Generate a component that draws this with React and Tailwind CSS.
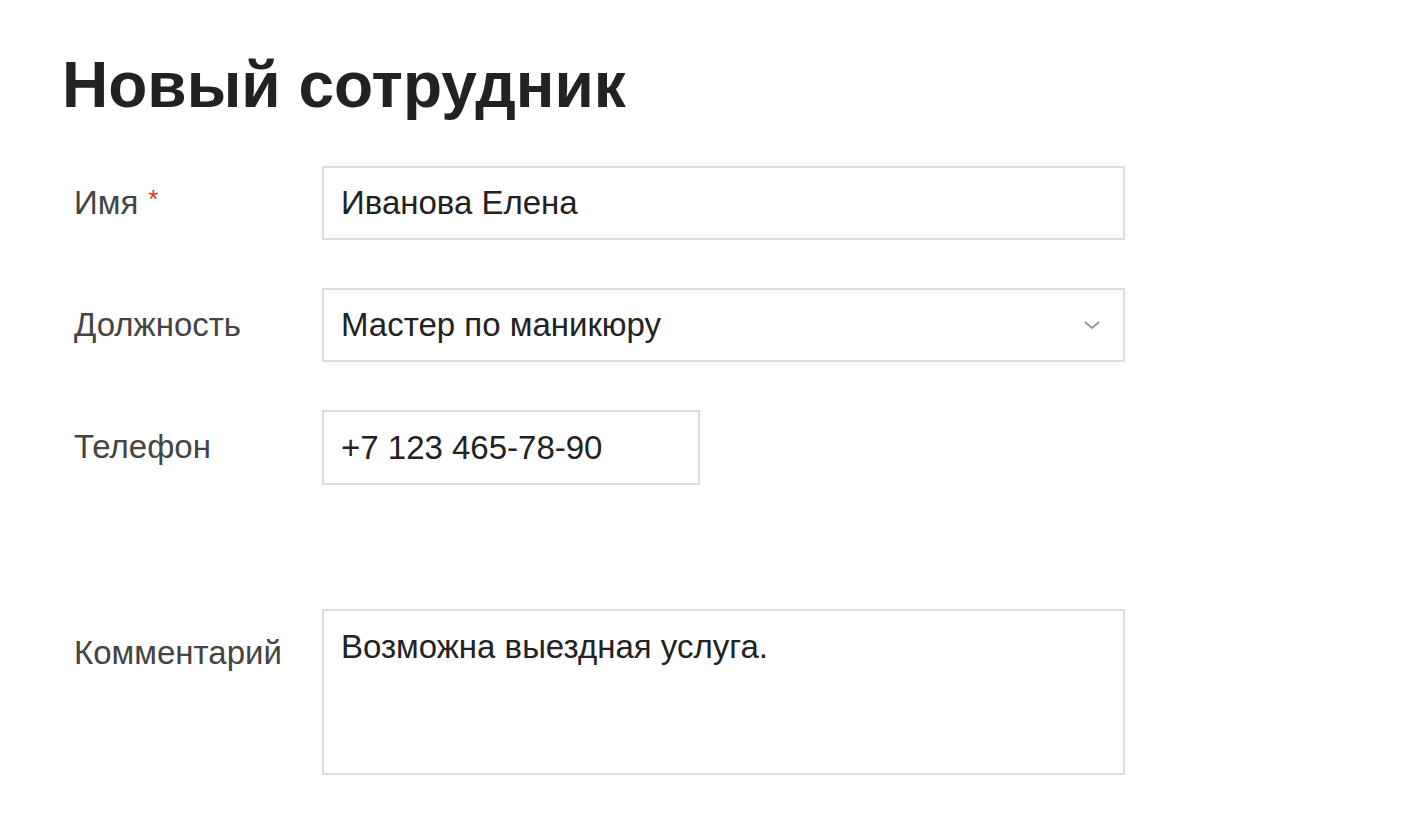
import React from 'react';

const Row = ({ label, required, children, top, className = '' }) => (
    <div className={`flex items-start ${className}`}>
        <div className={`w-[248px] shrink-0 text-[33px] leading-[38px] text-[#444] ${top ? 'pt-[25px]' : 'h-[74px] flex items-center'}`}>
            {label}
            {required && <span className="ml-[10px] text-[#e03131] text-[26px] self-start mt-[21px] leading-[24px]">*</span>}
        </div>
        {children}
    </div>
);

const App = () => {
    return (
        <div className="min-h-screen bg-white text-[#222]" style={{ fontFamily: '"Liberation Sans", Arial, sans-serif' }}>
            <div className="pl-[62px] pt-[44px]">
                <h1 className="text-[64px] font-bold leading-[82px] text-[#222]">Новый сотрудник</h1>
            </div>
            <div className="pl-[74px] pt-[40px] flex flex-col gap-[48px]">
                <Row label="Имя" required>
                    <div className="w-[803px] h-[74px] border-2 border-[#dcdcdc] flex items-center px-[17px] text-[33px]">
                        Иванова Елена
                    </div>
                </Row>
                <Row label="Должность">
                    <div className="w-[803px] h-[74px] border-2 border-[#dcdcdc] flex items-center justify-between pl-[17px] pr-[22px] text-[33px]">
                        <span>Мастер по маникюру</span>
                        <svg width="18" height="12" viewBox="0 0 18 12" fill="none">
                            <path d="M2 3l7 6 7-6" stroke="#999" strokeWidth="2" />
                        </svg>
                    </div>
                </Row>
                <Row label="Телефон">
                    <div className="w-[378px] h-[75px] border-2 border-[#dcdcdc] flex items-center px-[17px] text-[33px]">
                        +7 123 465-78-90
                    </div>
                </Row>
                <Row label="Комментарий" top className="mt-[76px]">
                    <div className="w-[803px] h-[166px] border-2 border-[#dcdcdc] px-[17px] pt-[17px] text-[33px] leading-[38px]">
                        Возможна выездная услуга.
                    </div>
                </Row>
            </div>
        </div>
    );
};

export default App;
